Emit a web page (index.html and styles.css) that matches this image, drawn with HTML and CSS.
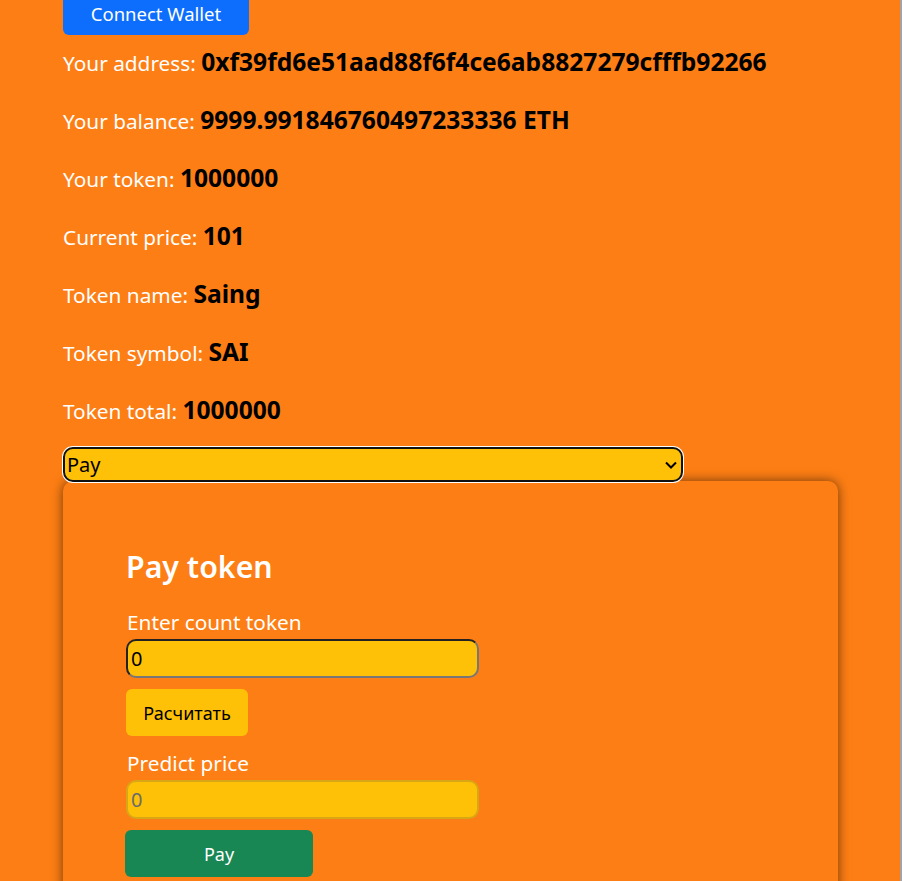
FILE: index.html
```html
<!DOCTYPE html>
<html>
<head>
<meta charset="utf-8">
<link rel="stylesheet" href="styles.css">
</head>
<body>
<div class="page">
  <div class="container">
    <button class="btn btn-blue">Connect Wallet</button>
    <p class="info">Your address: <b>0xf39fd6e51aad88f6f4ce6ab8827279cfffb92266</b></p>
    <p class="info">Your balance: <b>9999.991846760497233336 ETH</b></p>
    <p class="info">Your token: <b>1000000</b></p>
    <p class="info">Current price: <b>101</b></p>
    <p class="info">Token name: <b>Saing</b></p>
    <p class="info">Token symbol: <b>SAI</b></p>
    <p class="info">Token total: <b>1000000</b></p>
    <div class="select-wrap">
      <select class="select"><option>Pay</option></select>
      <svg class="chev" width="14" height="10" viewBox="0 0 14 10"><path d="M2 2.5 L7 7.5 L12 2.5" fill="none" stroke="#000" stroke-width="2"/></svg>
    </div>
    <div class="card">
      <h2 class="title">Pay token</h2>
      <label class="label">Enter count token</label>
      <input class="input input-active" type="text" value="0">
      <button class="btn btn-yellow">Расчитать</button>
      <label class="label">Predict price</label>
      <input class="input input-disabled" type="text" placeholder="0">
      <button class="btn btn-green">Pay</button>
    </div>
  </div>
  <div class="edge"></div>
</div>
</body>
</html>
```
FILE: styles.css
```css
html, body {
  margin: 0;
  padding: 0;
  height: 100%;
  overflow: hidden;
}
body {
  background: #fd7e14;
  font-family: "Noto Sans", "Open Sans", sans-serif;
  color: #fff;
}
.page {
  display: flex;
  height: 100%;
}
.container {
  flex: 1;
  padding-left: 63px;
  margin-top: -8px;
}
.edge {
  width: 2px;
  background: #a3a3a3;
}
.btn {
  font-family: inherit;
  font-size: 18px;
  border: none;
  border-radius: 6px;
  cursor: pointer;
  display: block;
  padding: 0;
}
.btn-blue {
  background: #0d6efd;
  color: #fff;
  width: 186px;
  height: 43px;
  font-size: 18.5px;
}
.info {
  margin: 0;
  font-size: 20.8px;
  line-height: 30px;
  margin-top: 13px;
  margin-bottom: 15px;
}
.info + .info {
  margin-top: 28px;
  margin-bottom: 0;
}
.info b {
  color: #000;
  font-weight: 700;
  font-size: 24.6px;
  line-height: 1;
}
.select-wrap {
  position: relative;
  width: 620px;
  margin-top: 21px;
}
.select {
  appearance: none;
  -webkit-appearance: none;
  width: 620px;
  height: 35px;
  background: #ffc107;
  border: 2px solid #111;
  box-shadow: 0 0 0 1px #fff;
  border-radius: 10px;
  font-family: inherit;
  font-size: 20px;
  padding: 0 0 0 2px;
  color: #000;
  display: block;
}
.chev {
  position: absolute;
  right: 5px;
  top: 13px;
}
.card {
  width: 775px;
  height: 420px;
  box-sizing: border-box;
  border-radius: 10px;
  box-shadow: 0 0 12px rgba(0, 0, 0, 0.55);
  padding: 66px 63px 0 63px;
  margin-top: -1px;
}
.title {
  margin: 0 0 20px 0;
  font-size: 30.3px;
  line-height: 40px;
  font-weight: 600;
}
.label {
  display: block;
  font-size: 20.8px;
  line-height: 30px;
  margin-left: 1px;
  margin-bottom: 2px;
}
.input {
  display: block;
  box-sizing: border-box;
  width: 353px;
  height: 39px;
  border-radius: 10px;
  background: #ffc107;
  font-family: inherit;
  font-size: 20px;
  padding: 0 0 0 3px;
  color: #000;
  outline: none;
}
.input-active {
  border: 2px solid;
  border-color: #222 #777 #777 #222;
}
.input-disabled {
  border: 2px solid #d9a615;
}
.input-disabled::placeholder {
  color: #6b6b6b;
}
.btn-yellow {
  background: #ffc107;
  color: #000;
  width: 122px;
  height: 47px;
  margin-top: 11px;
  margin-bottom: 12px;
}
.btn-green {
  background: #198754;
  color: #fff;
  width: 188px;
  height: 47px;
  margin-top: 11px;
  margin-left: -1px;
}
```
